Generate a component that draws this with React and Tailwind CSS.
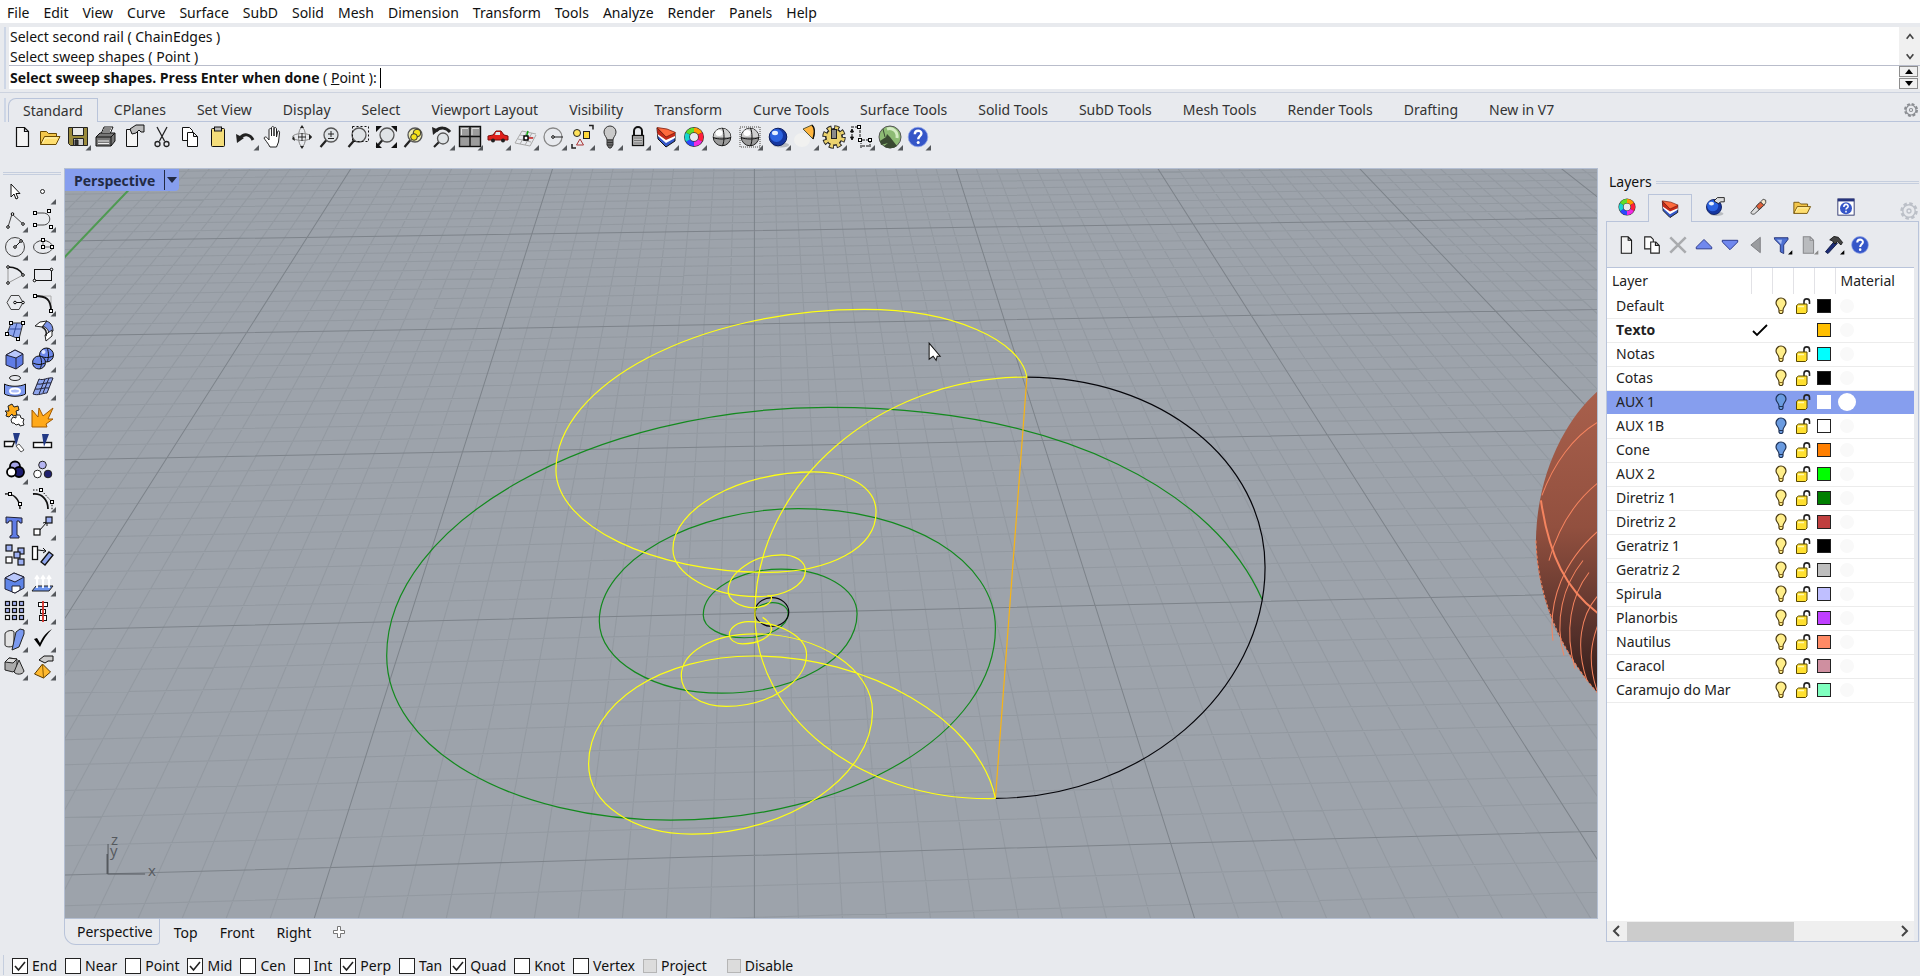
import { useState } from 'react'

const MENUS = ['File', 'Edit', 'View', 'Curve', 'Surface', 'SubD', 'Solid', 'Mesh', 'Dimension', 'Transform', 'Tools', 'Analyze', 'Render', 'Panels', 'Help']

const TOOL_TABS = ['Standard', 'CPlanes', 'Set View', 'Display', 'Select', 'Viewport Layout', 'Visibility', 'Transform', 'Curve Tools', 'Surface Tools', 'Solid Tools', 'SubD Tools', 'Mesh Tools', 'Render Tools', 'Drafting', 'New in V7']

const LAYERS = [
  { name: 'Default', color: '#000000', on: true },
  { name: 'Texto', color: '#ffbf00', current: true },
  { name: 'Notas', color: '#00ffff', on: true },
  { name: 'Cotas', color: '#000000', on: true },
  { name: 'AUX 1', color: '#ffffff', on: false, selected: true },
  { name: 'AUX 1B', color: '#ffffff', on: false },
  { name: 'Cone', color: '#ff7f00', on: false },
  { name: 'AUX 2', color: '#00ff00', on: true },
  { name: 'Diretriz 1', color: '#007f00', on: true },
  { name: 'Diretriz 2', color: '#bf3f3f', on: true },
  { name: 'Geratriz 1', color: '#000000', on: true },
  { name: 'Geratriz 2', color: '#bebebe', on: true },
  { name: 'Spirula', color: '#bfbfff', on: true },
  { name: 'Planorbis', color: '#bf3fff', on: true },
  { name: 'Nautilus', color: '#ff8a65', on: true },
  { name: 'Caracol', color: '#cf8fa0', on: true },
  { name: 'Caramujo do Mar', color: '#7fffbf', on: true },
]

const SNAPS = [
  ['End', true], ['Near', false], ['Point', false], ['Mid', true], ['Cen', false], ['Int', false],
  ['Perp', true], ['Tan', false], ['Quad', true], ['Knot', false], ['Vertex', false],
]

/* ---------- shared icon pieces ---------- */

const Node = ({ x, y }) => <rect x={x - 1.5} y={y - 1.5} width="3" height="3" fill="#fff" stroke="#000" />
const Dot = ({ x, y }) => <circle cx={x} cy={y} r="1.3" fill="#fff" stroke="#000" />
const Cube = ({ x, y, s = 6, fill = '#9db0f2' }) => (
  <rect x={x} y={y} width={s} height={s} fill={fill} stroke="#111" strokeWidth="1.2" />
)

const Page = ({ fill = '#f4f4f4', stroke = '#111' }) => (
  <path d="M8.5 4.5h8l4 4v15h-12zM16.5 4.5v4h4" fill={fill} stroke={stroke} strokeWidth="1.2" />
)

const Folder = () => (
  <g stroke="#6b4a00">
    <path d="M4.5 21.5V8.5h6l2 2h8v3" fill="#f3c64b" />
    <path d="M4.5 21.5l4-8h15.5l-4 8z" fill="#ffdf70" />
    <path d="M6.5 20l2.5-5h12" fill="none" stroke="#fff3b8" />
  </g>
)

const Wheel = () => (
  <g fill="none" strokeWidth="4.5">
    <circle cx="14" cy="14" r="7" stroke="#333" strokeWidth="6" />
    <path d="M14 7a7 7 0 0 1 6.1 3.5" stroke="#ff9a00" />
    <path d="M20.1 10.5a7 7 0 0 1 0 7" stroke="#ff1e3c" />
    <path d="M20.1 17.5a7 7 0 0 1-6.1 3.5" stroke="#f02be0" />
    <path d="M14 21a7 7 0 0 1-6.1-3.5" stroke="#2b49ff" />
    <path d="M7.9 17.5a7 7 0 0 1 0-7" stroke="#16d5d0" />
    <path d="M7.9 10.5a7 7 0 0 1 6.1-3.5" stroke="#5de02a" />
  </g>
)

const LayerStack = () => (
  <g strokeLinejoin="round">
    <path d="M5 5l1 11 8 8 9-6V10l-9 4z" fill="#3558c8" stroke="#111" />
    <path d="M5.5 10l.5 3 8 7 9-5v-3l-9 4z" fill="#fff" />
    <path d="M5 5l.5 6 8.5 6 9-4V9l-9 5z" fill="#c42a18" />
    <path d="M5 4.5l10 1.5 8.5 3.5-9.5 4.5z" fill="#ff6a3c" stroke="#7c1a0a" strokeWidth="0.8" />
  </g>
)

const BlueBall = () => (
  <g>
    <ellipse cx="17" cy="22" rx="8" ry="2.5" fill="#8a8d92" opacity="0.5" />
    <circle cx="14" cy="14" r="8.8" fill="#1536a0" stroke="#0a1c5e" />
    <circle cx="12.5" cy="12.5" r="6.5" fill="#2c63e0" />
    <ellipse cx="11" cy="10" rx="3" ry="2.2" fill="#e4efff" />
  </g>
)

const HelpBall = () => (
  <g>
    <circle cx="14" cy="14" r="9.8" fill="#3556c8" stroke="#8fa3e6" strokeWidth="0.8" />
    <path d="M10.8 11.2c0-4.6 6.6-4.4 6.6-.7 0 2.6-3.2 2.7-3.2 5.7" fill="none" stroke="#fff" strokeWidth="2.4" />
    <circle cx="14.2" cy="19.4" r="1.5" fill="#fff" />
  </g>
)

const GreyBall = () => (
  <g>
    <circle cx="14" cy="14" r="8.8" fill="#9a9a9a" stroke="#222" />
    <path d="M14 5.5A8.5 8.5 0 0 0 5.5 14h17A8.5 8.5 0 0 0 14 5.5z" fill="#cfcfcf" />
    <ellipse cx="11" cy="10" rx="3.5" ry="3" fill="#fff" />
    <path d="M5 14.5c5 2 13 2 18 0M14.5 5c2 5 2 13 0 18" fill="none" stroke="#111" />
  </g>
)

const Lens = ({ fill = '#dfe3e6' }) => (
  <g>
    <path d="M10.5 17L4.5 24" stroke="#222" strokeWidth="2.2" />
    <circle cx="15" cy="12" r="7" fill={fill} stroke="#555" strokeWidth="1.3" />
  </g>
)

/* ---------- top toolbar ---------- */

const STANDARD_TOOLS = [
  { label: 'New', art: <Page /> },
  { label: 'Open', art: <Folder /> },
  { label: 'Save', fly: true, art: (
    <g stroke="#222">
      <path d="M4.5 4.5h19v18h-17l-2-2z" fill="#9a8a3c" />
      <path d="M8.5 4.5h11v8h-11z" fill="#e8e8e8" />
      <path d="M9.5 15.5h10v7h-10z" fill="#cfcfcf" />
      <path d="M11 17h3v5h-3z" fill="#333" />
    </g>
  ) },
  { label: 'Print', art: (
    <g stroke="#111" strokeLinejoin="round">
      <path d="M9 11l3-7h9l-3 7z" fill="#fff" />
      <path d="M4 14l4-4h15v8l-4 5H4z" fill="#777" />
      <path d="M4 14h15l4-4M19 14v9M11 8h7M12 6h7" fill="none" />
      <path d="M6 18h11M6 20.5h11" stroke="#eee" />
    </g>
  ) },
  { label: 'Document properties', art: (
    <g>
      <path d="M6.5 6.5h11v17h-11z" fill="#f4f4f4" stroke="#111" />
      <path d="M10 6l6-4h8v7h-3l-2-2-3 3-4 1z" fill="#bbb" stroke="#111" />
    </g>
  ) },
  { label: 'Cut', art: (
    <g fill="none" stroke="#222" strokeWidth="1.3">
      <path d="M9 4l7.5 14M19 4l-7.5 14" />
      <circle cx="9.5" cy="21" r="2.5" /><circle cx="18.5" cy="21" r="2.5" />
    </g>
  ) },
  { label: 'Copy', art: (
    <g fill="#fff" stroke="#111">
      <path d="M6.5 4.5h7l3 3v10h-10z" />
      <path d="M11.5 9.5h6l4 4v10h-10zM17.5 9.5v4h4" />
    </g>
  ) },
  { label: 'Paste', art: (
    <g stroke="#111">
      <rect x="7.5" y="5.5" width="13" height="18" rx="1" fill="#f4dd7a" />
      <rect x="10.5" y="4" width="7" height="4" fill="#b9b9b9" />
    </g>
  ) },
  { label: 'Undo', fly: true, art: (
    <g>
      <path d="M8 15c4-5 10-4 13 2" fill="none" stroke="#222" strokeWidth="3" />
      <path d="M4 11l1 9 7-5z" fill="#222" />
    </g>
  ) },
  { label: 'Pan', art: (
    <path d="M10 24c-2-4-5-7-6-9 1-2 3-1 5 2V7c0-2 2.5-2 2.5 0v6V5c0-2 2.5-2 2.5 0v8V6c0-2 2.5-2 2.5 0v8l1-5c.5-2 2.5-1 2 1l-1 9-2 5z" fill="#fff" stroke="#222" />
  ) },
  { label: 'Rotate view', art: (
    <g fill="none" stroke="#888">
      <ellipse cx="14" cy="14" rx="9.5" ry="3.5" /><ellipse cx="14" cy="14" rx="3.5" ry="9.5" />
      <path d="M12 5l2-3 2 3zM12 23l2 3 2-3zM6 13l-2 3 3 2zM21 11l3 3-3 3z" fill="#222" stroke="none" />
      <path d="M14 10v8M10 14h8" stroke="#222" />
    </g>
  ) },
  { label: 'Zoom dynamic', art: <g><Lens /><path d="M12 11h6M15 8v6M12 15.5h6" stroke="#222" /></g> },
  { label: 'Zoom window', art: (
    <g><Lens /><rect x="8.5" y="3.5" width="16" height="15" fill="none" stroke="#111" strokeDasharray="2 2" /></g>
  ) },
  { label: 'Zoom extents', art: (
    <g><Lens /><path d="M4 3h6L4 9zM25 3v6l-6-6zM25 25h-6l6-6zM4 25v-6l6 6z" fill="#111" /></g>
  ) },
  { label: 'Zoom selected', art: (
    <g><Lens fill="#ece9b0" /><circle cx="17" cy="10" r="3.8" fill="#f3e11c" stroke="#333" /><circle cx="14" cy="14" r="3.3" fill="#f3e11c" stroke="#333" /></g>
  ) },
  { label: 'Undo view change', fly: true, art: (
    <g>
      <path d="M11 19l-5 5" stroke="#222" strokeWidth="2.2" />
      <circle cx="15" cy="15.5" r="5.5" fill="#dfe3e6" stroke="#555" strokeWidth="1.3" />
      <path d="M8 8c4-4 10-4 14 1" fill="none" stroke="#222" strokeWidth="3" /><path d="M4 4l1 8 6-5z" fill="#222" />
    </g>
  ) },
  { label: 'Four viewports', fly: true, art: (
    <g fill="#9c9c9c" stroke="#111" strokeWidth="1.4">
      <rect x="3.5" y="3.5" width="21" height="20" /><path d="M14 3.5v20M3.5 13.5h21" />
      <path d="M5.5 12V5.5H12M16 12V5.5h7" stroke="#ddd" strokeWidth="1" fill="none" />
    </g>
  ) },
  { label: 'Named views', fly: true, art: (
    <g>
      <path d="M4 13l5-1 3-4h5l3 4 4 1v4H4z" fill="#e0201c" stroke="#7a0c0a" />
      <path d="M12 9h4v3h-5z" fill="#dfe8ee" />
      <circle cx="9" cy="17.5" r="2" fill="#222" /><circle cx="19" cy="17.5" r="2" fill="#222" />
    </g>
  ) },
  { label: 'CPlane', fly: true, art: (
    <g fill="none" stroke="#aaa">
      <path d="M3 20l7-12M8 21l7-12M13 22l7-12M18 23l6-11M10 8l14 3M8 12l14 3M6 16l13 3M3 20l15 3" />
      <path d="M14 15h7" stroke="#c22" strokeWidth="1.5" /><path d="M14 15l2-7" stroke="#1a1" strokeWidth="1.5" />
      <rect x="12" y="13" width="4" height="4" fill="#fff" stroke="#000" strokeWidth="1.4" />
    </g>
  ) },
  { label: 'Circle', fly: true, art: (
    <g fill="none">
      <circle cx="13" cy="14" r="9" stroke="#888" strokeWidth="1.3" /><path d="M13 14h10" stroke="#222" />
      <Dot x={13} y={14} />
    </g>
  ) },
  { label: 'Select', fly: true, art: (
    <g stroke="#222">
      <circle cx="9" cy="10" r="3.5" fill="#ffe25a" /><rect x="15.5" y="8.5" width="6" height="7" fill="#ffd83a" />
      <path d="M12 16l3.5 6h-7z" fill="none" stroke="#a33" /><path d="M21 2.5h4v4M4 21v4h4" fill="none" strokeWidth="1.5" />
    </g>
  ) },
  { label: 'Hide', fly: true, art: (
    <g stroke="#333">
      <path d="M11 17c0-3-3-4-3-8a6 6 0 0 1 12 0c0 4-3 5-3 8z" fill="#c9c9c9" /><path d="M11 17h6v5l-2 3h-2l-2-3z" fill="#6f6f6f" />
      <path d="M11 19.5h6M11 22h6" />
    </g>
  ) },
  { label: 'Lock', fly: true, art: (
    <g>
      <path d="M10 13V8a4 4 0 0 1 8 0v5" fill="none" stroke="#111" strokeWidth="2" />
      <rect x="8.5" y="12.5" width="11" height="10" fill="#bdbdbd" stroke="#111" strokeWidth="1.3" /><path d="M10 15h8M10 17.5h8M10 20h8" stroke="#777" />
    </g>
  ) },
  { label: 'Layers', fly: true, art: <LayerStack /> },
  { label: 'Object color', fly: true, art: <Wheel /> },
  { label: 'Shaded', art: <GreyBall /> },
  { label: 'Rendered', fly: true, art: (
    <g><rect x="4" y="4" width="20" height="20" fill="none" stroke="#999" strokeWidth="2" strokeDasharray="1 1" /><GreyBall /></g>
  ) },
  { label: 'Render', fly: true, art: <BlueBall /> },
  { label: 'Spotlight', fly: true, art: (
    <g>
      <ellipse cx="10" cy="17" rx="8" ry="7" fill="#f3f3f0" opacity="0.8" />
      <path d="M11 6l9-4c3 3 3 8 1 14z" fill="#ffb640" stroke="#553" /><path d="M20 2c3 3 3 8 1 14" fill="none" stroke="#111" strokeWidth="1.4" />
    </g>
  ) },
  { label: 'Options', fly: true, art: (
    <g fill="none">
      <circle cx="14" cy="14" r="9" stroke="#222" strokeWidth="5.5" strokeDasharray="4.6 2.469" />
      <circle cx="14" cy="14" r="7.5" stroke="#222" strokeWidth="3" />
      <circle cx="14" cy="14" r="9" stroke="#ecd36e" strokeWidth="3.6" strokeDasharray="3 4.069" strokeDashoffset="-0.8" />
      <circle cx="14" cy="14" r="7.5" fill="#ecd36e" />
      <rect x="11.5" y="6.5" width="5" height="9" fill="#8a8a8a" stroke="#222" />
    </g>
  ) },
  { label: 'Dimension', fly: true, art: (
    <g fill="none" stroke="#111">
      <path d="M3 4h9v13h10v8M4 7v9M13 25v-5M14 23h7" strokeDasharray="3 1" /><path d="M2.5 9L4 6l1.5 3zM2.5 14L4 17l1.5-3z" fill="#111" />
      <Node x={11} y={4} /><Node x={12} y={17} /><Node x={22} y={17} />
    </g>
  ) },
  { label: 'Grasshopper', fly: true, art: (
    <g>
      <circle cx="14" cy="14" r="11" fill="#8dbb74" stroke="#555" />
      <path d="M11 6c6-2 11 3 10 9" fill="none" stroke="#d5ecc4" strokeWidth="3" />
      <path d="M4 18l6-4 1-3 3 3 7 9c-4 3-10 3-13 0l4-3-7 2z" fill="#3a4a32" /><path d="M9 14L7 6" stroke="#3a4a32" />
    </g>
  ) },
  { label: 'Help', fly: true, art: <HelpBall /> },
]

/* ---------- left toolbar, two per row ---------- */

const SIDE_TOOLS = [
  { label: 'Pointer', art: <path d="M10 7v13l3-3 2 5 2-1-2-4.5h4z" fill="#fff" stroke="#111" /> },
  { label: 'Point', fly: true, art: <circle cx="13.5" cy="14.5" r="2" fill="#fff" stroke="#222" /> },
  { label: 'Polyline', fly: true, art: <g><path d="M7 22l4-13 11 10" fill="none" stroke="#444" /><Dot x={7} y={22} /><Dot x={11.5} y={9} /><Dot x={22} y={19} /></g> },
  { label: 'Curve', fly: true, art: <g><path d="M6 8h8c9 0 9 12 0 12H6" fill="none" stroke="#444" /><Node x={6} y={8} /><Node x={20} y={6} /><Node x={6} y={20} /><Node x={22} y={22} /></g> },
  { label: 'Circle', fly: true, art: <g><circle cx="14" cy="14" r="9.5" fill="none" stroke="#444" /><path d="M14 14l6-6" stroke="#111" /><Dot x={14} y={14} /><Dot x={20} y={8} /></g> },
  { label: 'Ellipse', fly: true, art: <g><ellipse cx="14" cy="14" rx="9.5" ry="6.5" fill="none" stroke="#444" /><path d="M14 7v7h9" stroke="#666" fill="none" /><Node x={14} y={7} /><Node x={14} y={14} /><Node x={23} y={14} /></g> },
  { label: 'Arc', fly: true, art: <g><path d="M7 22V6M7 22l15-8" stroke="#999" /><path d="M7 6c8 0 13 4 15 8" fill="none" stroke="#111" strokeWidth="1.3" /><Dot x={7} y={6} /><Dot x={22} y={14} /><Dot x={7} y={22} /></g> },
  { label: 'Rectangle', fly: true, art: <g><rect x="5.5" y="8.5" width="17" height="11" fill="none" stroke="#111" /><Dot x={22.5} y={8.5} /><Dot x={5.5} y={19.5} /></g> },
  { label: 'Polygon', fly: true, art: <g><path d="M6 13.5l4-7h8l4 7-4 7h-8z" fill="none" stroke="#444" /><path d="M14 13.5h8" stroke="#111" /><Dot x={14} y={13.5} /><Dot x={22} y={13.5} /></g> },
  { label: 'Fillet curves', fly: true, art: <g><path d="M6 7h16v15" fill="none" stroke="#aaa" /><path d="M6 7c11 0 16 3 16 15" fill="none" stroke="#111" strokeWidth="1.8" /><Node x={6} y={7} /><Node x={22} y={22} /></g> },
  { label: 'Surface from points', fly: true, art: <g><path d="M10 6h12l-4 16-12-5z" fill="#8fa6ee" stroke="#333" /><path d="M16 6l-4 14M8 12h12" stroke="#334a9a" /><Node x={10} y={6} /><Node x={22} y={6} /><Node x={6} y={17} /><Node x={17} y={22} /></g> },
  { label: 'Blend surface', fly: true, art: <g stroke="#222"><path d="M14 9c4 2 6 4 6 9l4-4c0-6-3-9-7-10z" fill="#7b93e8" /><path d="M6 9l5-4 7-1-5 6z" fill="#fff" /><path d="M16 18l7-5v6l-6 5z" fill="#fff" /><path d="M13 10c4 2 5 5 4 9" fill="none" strokeWidth="1.5" /></g> },
  { label: 'Box', fly: true, art: <g stroke="#223" strokeLinejoin="round"><path d="M5 10l9-5 8 4v10l-7 5-10-4z" fill="#5f7ce6" /><path d="M5 10l9-5 8 4-7 4z" fill="#b9c7fb" /><path d="M15 13v11" /></g> },
  { label: 'Sphere', fly: true, art: <g stroke="#111"><circle cx="17.5" cy="10" r="7" fill="#6d88ea" /><path d="M11 11c4 2 9 2 13 0M18 3c2 4 2 10 0 14" fill="none" /><circle cx="10" cy="17.5" r="6.5" fill="#6d88ea" /><path d="M4 18c4 2 8 2 12 0M11 11c2 4 2 9 0 13" fill="none" /><circle cx="14.5" cy="7" r="2" fill="#dde5ff" stroke="none" /></g> },
  { label: 'Cylinder', fly: true, art: <g><ellipse cx="14" cy="5" rx="5.5" ry="2.5" fill="none" stroke="#222" /><path d="M3.5 11c5 3 16 3 21 0v10c-5 3-16 3-21 0z" fill="#7b97ee" stroke="#111" /><ellipse cx="14" cy="18" rx="5" ry="2.5" fill="#aebff8" stroke="#fff" strokeWidth="2" /></g> },
  { label: 'Surface edit', fly: true, art: <g stroke="#223"><path d="M10 6c4 2 9-2 14-1l-6 15c-4 0-9 3-14 1z" fill="#8fa6ee" /><path d="M16 6l-6 15M20 5l-6 15M8 11c4 1 9-2 14-1M6 16c4 1 9-2 14-1" fill="none" /></g> },
  { label: 'Mesh tools', art: <g stroke="#222" strokeLinejoin="round"><path d="M4 10l4 0-1-5 4-2 2 3 4-1 1 4-3 1 1 4-4 1-1-2-3 3-3-1 1-3z" fill="#ffab1a" /><path d="M12 16l3 1 0-3 4 0 1 3 3 1-1 3 1 3-4 1-1-2-3 1-2-2-2 0-1-3z" fill="#fff" /></g> },
  { label: 'Explode', art: <path d="M3 26V9l6 7 1-9 4 8L24 7l-5 11h5l-7 5 1 3z" fill="#ffa91a" stroke="#a35a00" /> },
  { label: 'Trim', art: <g stroke="#111"><path d="M3.5 12.5h10l-2 5h-8z" fill="#fff" strokeWidth="1.4" /><path d="M12 4h7l-4 13z" fill="#233a86" stroke="none" /><path d="M15 17l3-2 5 6-3 2z" fill="#fff" stroke="#555" /></g> },
  { label: 'Split', art: <g stroke="#111"><rect x="4.5" y="13.5" width="18" height="5" fill="#fff" strokeWidth="1.4" /><path d="M13 5h7l-5 13z" fill="#233a86" stroke="none" /></g> },
  { label: 'Boolean', fly: true, art: <g stroke="#000" strokeWidth="1.8"><circle cx="14" cy="9.5" r="5" fill="#a5a5e8" /><circle cx="18" cy="15" r="5" fill="#1c1c70" /><circle cx="10.5" cy="15" r="4.5" fill="#fff" /></g> },
  { label: 'Group', art: <g stroke="#222"><circle cx="13.5" cy="8" r="3.8" fill="#b5b5f2" /><circle cx="8.5" cy="17" r="3.8" fill="#fff" /><circle cx="19" cy="17" r="3.8" fill="#20206e" /></g> },
  { label: 'Edit points', art: <g><path d="M4 9c8-1 15 5 15 15" fill="none" stroke="#111" strokeWidth="1.4" /><Node x={9} y={9} /><Node x={19} y={19} /></g> },
  { label: 'Control points', fly: true, art: <g><path d="M4 9c8-1 15 5 15 15" fill="none" stroke="#111" strokeWidth="1.8" /><path d="M4 5h8l11 12v8" fill="none" stroke="#111" strokeDasharray="1.5 1.5" /><Node x={12} y={5} /><Node x={23} y={17} /></g> },
  { label: 'Text', art: <path d="M5 4l16 1v5h-2l-1-2h-2v14l2 1v2H9v-2l2-1V8H8l-1 2H5z" fill="#5f7ce6" stroke="#223" /> },
  { label: 'Move', fly: true, art: <g><path d="M10 18l8-9M14 10l4-1v4" fill="none" stroke="#111" /><Cube x={17} y={4} /><Cube x={5} y={16} fill="#fff" /></g> },
  { label: 'Copy objects', art: <g><Cube x={5} y={4} /><Cube x={17} y={7} /><Cube x={13} y={11} /><Cube x={5} y={16} fill="#fff" /><Cube x={17} y={18} /></g> },
  { label: 'Rotate', art: <g stroke="#111"><rect x="3.5" y="5.5" width="5" height="13" fill="#fff" strokeWidth="1.3" /><path d="M9 9l8 1M14 7l3 3-3 2" fill="none" /><path d="M12 21l8-10 4 3-8 10z" fill="#8fa6ee" strokeWidth="1.3" /></g> },
  { label: 'Solid edit', fly: true, art: <g stroke="#223" strokeLinejoin="round"><path d="M4 9l9-5 10 4v11l-9 5-10-4z" fill="#5f85e8" /><path d="M4 9l9-5 10 4-9 5z" fill="#b9c7fb" /><path d="M11 17l8 0v4l-5 3-3-1z" fill="#fff" /></g> },
  { label: 'Extrude up', fly: true, art: <g><path d="M3 22l4-5h17l-4 5z" fill="#6d94ee" stroke="#222" /><path d="M8 19V8M14 19V8M20 19V8M6 10l2-3 2 3M12 10l2-3 2 3M18 10l2-3 2 3" fill="none" stroke="#fff" strokeWidth="1.8" /></g> },
  { label: 'Array', fly: true, art: <g>{[4.5, 11.5, 18.5].map(y => [4.5, 11.5, 18.5].map(x => <Cube key={x + '-' + y} x={x} y={y} s={4} fill={x === 4.5 && y === 18.5 ? '#fff' : '#a9b6f4'} />))}</g> },
  { label: 'Align', fly: true, art: <g fill="#fff" stroke="#111"><rect x="9.5" y="5.5" width="9" height="4" /><rect x="11.5" y="12.5" width="5" height="4" /><rect x="10.5" y="18.5" width="7" height="5" /><path d="M14 4v21" stroke="#d8322a" strokeWidth="1.8" /></g> },
  { label: 'Cap', fly: true, art: <g stroke="#222"><path d="M4 9c0-3 8-5 9-2v13c-2 3-9 2-9 0z" fill="#e2e2e2" /><path d="M15 7l4-3 4 1v4l-5 13-7 3z" fill="#7b9af0" /></g> },
  { label: 'Check', fly: true, art: <path d="M5 14l3-1 3 5C14 11 18 7 23 4c-5 5-9 11-12 18z" fill="#000" /> },
  { label: 'Solids', fly: true, art: <g stroke="#222"><path d="M4 9l4-4 8 1v9l-4 4-8-2z" fill="#aaa" /><path d="M4 9l4-4 8 1-4 4z" fill="#ddd" /><path d="M18 7l5 11c-1 4-8 4-10 1z" fill="#bcbcbc" /></g> },
  { label: 'Render object', fly: true, art: <g><path d="M13.5 11l8 8-7 6-9-4z" fill="#ffb92e" stroke="#5a3a00" /><path d="M13.5 11l1 14" stroke="#8a5a00" /><path d="M10 7l5-4h9v5h-5l-3 2z" fill="#ccc" stroke="#111" /></g> },
]

const PANEL_TABS = [
  { label: 'Properties', art: <Wheel /> },
  { label: 'Layers', art: <LayerStack /> },
  { label: 'Rendering', art: <g><BlueBall /><path d="M14 7l4-4h8v5h-4l-3 2z" fill="#ddd" stroke="#111" /></g> },
  { label: 'Materials', art: <g stroke="#333"><path d="M6 20l9-10 4 4-9 8c-2 1-5 0-4-2z" fill="#ddd" /><path d="M12 13l5-5 4 4-6 5z" fill="#e0603a" /><path d="M17 8l3-3 3 1v3l-2 3z" fill="#f4e6cc" /></g> },
  { label: 'Libraries', art: <Folder /> },
  { label: 'Help', art: <g><rect x="4.5" y="4.5" width="19" height="19" fill="#fff" stroke="#222a66" /><path d="M4.5 4.5h19v3h-19z" fill="#27357f" /><circle cx="14" cy="15.5" r="7" fill="#3556c8" /><path d="M11.5 14c0-4 5-4 5-.5 0 1.5-2.5 1.5-2.5 3.5M14 18.5v2" fill="none" stroke="#fff" strokeWidth="1.8" /></g> },
]

const BlackFly = <path d="M26 20v5h-5z" fill="#000" />
const LAYER_TOOLS = [
  { label: 'New layer', art: <Page /> },
  { label: 'New sublayer', art: <g fill="#fff" stroke="#222" strokeWidth="1.3"><path d="M5.5 4.5h7l3 3v11h-10z" /><path d="M12.5 10.5h6l4 4v9h-10zM18 10.5v4h4" /></g> },
  { label: 'Delete', art: <path d="M5 5l18 18M23 5L5 23" stroke="#a9abae" strokeWidth="3" /> },
  { label: 'Move up', art: <path d="M14 7.5l9 9v2H5v-2z" fill="#7088ee" stroke="#1c2a80" /> },
  { label: 'Move down', art: <path d="M14 19.5l9-9v-2H5v2z" fill="#7088ee" stroke="#1c2a80" /> },
  { label: 'Move left', art: <path d="M19 5v18L8 14z" fill="#9a9c9f" stroke="#77797c" /> },
  { label: 'Filter', art: <g><path d="M5 5.5h16v2L16 14v10l-4-2v-8L5.5 7.5z" fill="#4d6fd0" stroke="#1c2a70" /><path d="M8 8h6l-1 5z" fill="#a9bdf4" />{BlackFly}</g> },
  { label: 'Columns', art: <g><Page fill="#b9bbbe" stroke="#88898c" /><path d="M26 20v5h-5z" fill="#888" /></g> },
  { label: 'Tools', art: <g><path d="M4 22L15 9l3 3L7 24z" fill="#1d2d78" stroke="#0c1640" /><path d="M9 8l5-4 5 1 5 6-2 3-4-4-3 3-3-4z" fill="#444" stroke="#111" />{BlackFly}</g> },
  { label: 'Help', art: <HelpBall /> },
]

function IconButton({ tool }) {
  return (
    <button type="button" aria-label={tool.label} title={tool.label} className="size-7 shrink-0">
      <svg viewBox="0 0 28 28" className="size-7">
        {tool.art}
        {tool.fly && <path d="M27 22v5.5h-5.5z" fill="#55585c" />}
      </svg>
    </button>
  )
}

function Gear({ className }) {
  return (
    <svg viewBox="0 0 20 20" className={className} fill="none" stroke="currentColor">
      <circle cx="10" cy="10" r="7.5" strokeWidth="2.5" strokeDasharray="3.5 2.39" />
      <circle cx="10" cy="10" r="6.2" strokeWidth="1.4" />
      <circle cx="10" cy="10" r="2" strokeWidth="1.3" />
    </svg>
  )
}

function Chevron({ d, className = 'size-3' }) {
  return <svg viewBox="0 0 12 12" className={className} fill="none" stroke="#444" strokeWidth="2"><path d={d} /></svg>
}

/* ---------- viewport drawing ---------- */

// ground plane -> screen, one unit is one major grid square
const HORIZON = -465
const CENTER = 754.5
function project(u, v) {
  const h = 1 / (0.0009279 + 0.00017 * v + 0.0000069 * u)
  return [CENTER + 0.318 * u * h, HORIZON + h]
}

function gridLine(u0, v0, u1, v1) {
  const [x0, y0] = project(u0, v0)
  const [x1, y1] = project(u1, v1)
  return `M${x0.toFixed(1)} ${y0.toFixed(1)}L${x1.toFixed(1)} ${y1.toFixed(1)}`
}

const minor = []
const major = []
for (let i = -45; i <= 50; i++) (i % 10 ? minor : major).push(gridLine(i / 10, -1.6, i / 10, 4.2))
for (let i = -16; i <= 42; i++) (i % 10 ? minor : major).push(gridLine(-5, i / 10, 5, i / 10))

// quarter arcs between the extremes of a curve: tangents alternate between
// horizontal and vertical, k is how round the corner towards the point is
function arcs(x, y, flat, horizontal) {
  let d = ''
  for (const [nx, ny, k = 0.552] of flat) {
    const dx = (nx - x) * k
    const dy = (ny - y) * k
    d += horizontal
      ? `C${x + dx} ${y} ${nx} ${ny - dy} ${nx} ${ny}`
      : `C${x} ${y + dy} ${nx - dx} ${ny} ${nx} ${ny}`
    x = nx
    y = ny
    horizontal = !horizontal
  }
  return d
}

const SPIRAL = 'M1520 865C1443 570 1190 328 790 328' + arcs(790, 328, [
  [46, 1022, 0.535], [524, 1482, 0.562], [1071, 945, 0.548], [739, 611, 0.565],
  [404, 925, 0.53], [610, 1127, 0.555], [838, 905, 0.555], [710, 780, 0.565],
  [579, 908, 0.535], [648, 972, 0.56], [722, 904, 0.54], [696, 874], [667, 897, 0.5],
], true)

const MOUTH = 'M1124 243' + arcs(1124, 243, [[1525, 775, 0.56], [1071, 1421, 0.54]], true)

const RAIL_TOP = 'M1124 243C1113 140 1000 54 850 54' + arcs(850, 54, [
  [331, 503, 0.535], [685, 789, 0.54], [870, 620, 0.59], [765, 508, 0.585],
  [528, 724, 0.525], [669, 857, 0.53], [751, 784, 0.57], [711, 740, 0.58],
  [621, 842, 0.52], [664, 888, 0.54], [694, 861], [687, 854],
], true)

const RAIL_MID = 'M1124 243' + arcs(1124, 243, [[666, 905, 0.548], [1060, 1422, 0.556]], true) + 'L1071 1421'

const RAIL_LOW = 'M1071 1421C1043 1200 855 1023 665 1023' + arcs(665, 1023, [
  [386, 1325, 0.562], [560, 1521, 0.57], [864, 1178, 0.53], [665, 961, 0.545],
  [542, 1079, 0.565], [618, 1164, 0.57], [753, 1019, 0.525], [655, 927, 0.54],
  [623, 963], [645, 989], [694, 947, 0.54],
], true) + 'C694 938 688 924 679 915'

function Scene() {
  return (
    <svg viewBox="65 169 1532 748" preserveAspectRatio="xMidYMid slice" className="absolute inset-0 size-full" fill="none">
      <rect x="65" y="169" width="1532" height="748" fill="#9da3ab" />
      <path d={minor.join('')} stroke="#90969e" strokeOpacity="0.8" />
      <path d={major.join('')} stroke="#7d838a" />
      <path d={gridLine(-3, 2.5, -3, 4.2)} stroke="#4f9a52" strokeWidth="2" />

      <g transform="translate(360 290) scale(0.5931 0.35714)" strokeWidth="1.2">
        <path vectorEffect="non-scaling-stroke" d={SPIRAL} stroke="#138a1e" />
        <path vectorEffect="non-scaling-stroke" d={MOUTH} stroke="#05050a" />
        <ellipse vectorEffect="non-scaling-stroke" cx="694.5" cy="900" rx="28.5" ry="40" stroke="#05050a" />
        <path vectorEffect="non-scaling-stroke" d="M1124 243L1071 1421" stroke="#f8b414" />
        <path vectorEffect="non-scaling-stroke" d={RAIL_TOP} stroke="#ffff14" />
        <path vectorEffect="non-scaling-stroke" d={RAIL_MID} stroke="#ffff14" />
        <path vectorEffect="non-scaling-stroke" d={RAIL_LOW} stroke="#ffff14" />
      </g>

      {/* shaded shell cut off by the right edge */}
      <defs>
        <linearGradient id="shell" x1="0" y1="0" x2="0" y2="1">
          <stop offset="0" stopColor="#a9604c" />
          <stop offset="0.45" stopColor="#92503f" />
          <stop offset="0.8" stopColor="#54302a" />
          <stop offset="1" stopColor="#2f1a17" />
        </linearGradient>
      </defs>
      <path d="M1600 388C1567 415 1536 470 1535 540C1536 600 1562 655 1600 696z" fill="url(#shell)" />
      <g stroke="#f5845f">
        <path d="M1541 495C1552 465 1572 435 1600 420" />
        <path d="M1540 500C1548 555 1565 590 1600 615" strokeWidth="2" />
        <path d="M1548 560C1558 525 1576 498 1600 480" />
        <path d="M1552 640C1547 600 1562 560 1600 528" />
        <path d="M1563 655C1553 620 1562 585 1582 560" />
        <path d="M1574 668C1563 630 1570 595 1588 572" />
        <path d="M1586 680C1574 645 1580 615 1596 596" />
        <path d="M1596 690C1586 660 1590 640 1600 616" />
        <path d="M1535 540C1537 600 1562 655 1600 696" strokeDasharray="3 2" />
      </g>

      <path d="M109 843V873H146M108 853V873" stroke="#55595e" />
      <g fill="#55595e" className="font-['Open_Sans',sans-serif] text-[15px]">
        <text x="112" y="844">z</text>
        <text x="111" y="855">y</text>
        <text x="149" y="875">x</text>
      </g>
      <path d="M929 343v16l4-3 3 4 1-4h3z" fill="#fff" stroke="#111" />
    </svg>
  )
}

function Bulb({ on }) {
  return (
    <svg viewBox="0 0 14 18" className="block size-[18px]">
      <path d="M5 13c0-3-3-4-3-7a5 5 0 0 1 10 0c0 3-3 4-3 7v2l-1 1.5H6L5 15z" fill={on ? '#ffee8a' : '#6a9be0'} stroke={on ? '#4a3a10' : '#1f3358'} strokeWidth="1.2" />
      <path d="M5 13.5h4" stroke={on ? '#8a6a20' : '#1f3358'} />
    </svg>
  )
}

function OpenLock() {
  return (
    <svg viewBox="0 0 18 18" className="ml-px block size-[18px]">
      <path d="M10 7V4.5C10 1 15.5 1 15.5 4.5V7" fill="none" stroke="#222" strokeWidth="1.6" />
      <path d="M2.5 8.5l2-1.5h8.5v8l-1.5 1.5h-9z" fill="#ffe030" stroke="#5a4a00" />
      <path d="M4 9.5h6" stroke="#fff8b0" strokeWidth="1.5" />
    </svg>
  )
}

function LayerRow({ layer }) {
  return (
    <tr className={layer.selected ? 'h-6 bg-[#869eee]' : 'h-6 border-b border-[#ececec]'}>
      <td className={layer.current ? "pl-[9px] font-['Open_Sans',sans-serif] font-bold" : 'pl-[9px]'}>{layer.name}</td>
      <td>
        {layer.current && (
          <svg viewBox="0 0 18 14" className="h-[14px] w-[18px]" fill="none" stroke="#000" strokeWidth="1.8"><path d="M2 8l4 4L16 2" /></svg>
        )}
      </td>
      <td>{!layer.current && <Bulb on={layer.on} />}</td>
      <td>{!layer.current && <OpenLock />}</td>
      <td>
        <div
          className={layer.selected ? 'ml-[3px] size-[14px]' : 'ml-[3px] size-[14px] border border-[#222]'}
          style={{ background: layer.color }}
        />
      </td>
      <td className="pl-[3px]">
        <div className={layer.selected ? 'size-[18px] rounded-full bg-white' : 'ml-0.5 size-[14px] rounded-full bg-[#f9f9f9]'} />
      </td>
    </tr>
  )
}

function LayersPanel() {
  return (
    <aside className="mb-[5px] flex w-[313px] shrink-0 flex-col pt-1">
      <div className="flex items-center gap-1 pl-[3px]">
        <h2 className="text-[14px] leading-5">Layers</h2>
        <div className="h-[3px] flex-1 border-y border-[#c5cede]" />
      </div>
      <div className="flex h-[29px] items-end">
        {PANEL_TABS.map(tab => (
          <button
            key={tab.label}
            type="button"
            aria-label={tab.label}
            className={tab.label === 'Layers'
              ? 'z-10 -mb-px flex h-7 w-11 items-center justify-center border border-b-0 border-[#b9c4da] bg-[#e8eaee]'
              : 'flex h-7 w-11 items-center justify-center first:w-[42px]'}
          >
            <svg viewBox="0 0 28 28" className="size-6">{tab.art}</svg>
          </button>
        ))}
        <button type="button" aria-label="Panel options" className="ml-auto text-[#bcc0c8]"><Gear className="size-5" /></button>
      </div>
      <div className="flex min-h-0 flex-1 flex-col border border-[#b9c4da] pr-1">
        <div className="flex h-[45px] items-center pl-[6px]">
          {LAYER_TOOLS.map(tool => (
            <button key={tool.label} type="button" aria-label={tool.label} className="flex w-[26px] justify-center">
              <svg viewBox="0 0 28 28" className="size-6">{tool.art}</svg>
            </button>
          ))}
        </div>
        <div className="min-h-0 flex-1 overflow-hidden border-t border-[#b9c4da] bg-white">
          <table className="w-full table-fixed border-collapse text-left text-[14px] leading-5 text-[#222]">
            <colgroup>
              <col />
              <col className="w-[21px]" />
              <col className="w-[21px]" />
              <col className="w-[21px]" />
              <col className="w-[21px]" />
              <col className="w-[79px]" />
            </colgroup>
            <thead>
              <tr className="h-[26px]">
                <th className="pl-[5px] font-normal">Layer</th>
                <th className="border-l border-[#e2e2e6]" />
                <th className="border-l border-[#e2e2e6]" />
                <th className="border-l border-[#e2e2e6]" />
                <th className="border-l border-[#e2e2e6]" />
                <th className="border-l border-[#e2e2e6] pl-[5px] font-normal">Material</th>
              </tr>
            </thead>
            <tbody>
              {LAYERS.map(layer => <LayerRow key={layer.name} layer={layer} />)}
            </tbody>
          </table>
        </div>
        <div className="flex h-5 items-center bg-[#efefef]">
          <button type="button" aria-label="Scroll left" className="flex w-5 justify-center"><Chevron d="M8 1L3 6l5 5" /></button>
          <div className="h-[19px] flex-1"><div className="h-full w-5/8 bg-[#cccccc]" /></div>
          <button type="button" aria-label="Scroll right" className="flex w-5 justify-center"><Chevron d="M4 1l5 5-5 5" /></button>
        </div>
      </div>
    </aside>
  )
}

function CommandArea() {
  return (
    <section className="flex border-b-[3px] border-t-4 border-[#e8eaee] pl-1">
      <div className="w-[5px] shrink-0 border-l-2 border-[#cdd6e6] bg-[#e8eaee]" />
      <div className="flex-1 bg-white text-[14px]">
        <div className="flex h-[39px] border-b border-[#b9bdcb]">
          <div className="flex-1 pl-px leading-5">
            <p>Select second rail ( ChainEdges )</p>
            <p>Select sweep shapes ( Point )</p>
          </div>
          <div className="flex w-[21px] flex-col items-center justify-around bg-[#f0f0f0]">
            <button type="button" aria-label="Scroll up"><Chevron d="M2 8l4-5 4 5" className="size-[10px]" /></button>
            <button type="button" aria-label="Scroll down"><Chevron d="M2 4l4 5 4-5" className="size-[10px]" /></button>
          </div>
        </div>
        <div className="flex h-[23px] items-center">
          <label htmlFor="command" className="whitespace-pre pl-px"><b className="font-['Open_Sans',sans-serif]">Select sweep shapes. Press Enter when done</b> ( <u>P</u>oint ): </label>
          <div className="h-5 w-px bg-black" />
          <input id="command" className="min-w-0 flex-1 outline-none" />
          <div className="flex w-[21px] flex-col gap-px bg-[#f0f0f0] pr-0.5">
            <button type="button" aria-label="Previous command" className="flex h-[11px] items-center justify-center border border-[#8d8d8d]">
              <svg viewBox="0 0 8 5" className="h-[5px] w-2"><path d="M4 0l4 5H0z" /></svg>
            </button>
            <button type="button" aria-label="Next command" className="flex h-[11px] items-center justify-center border border-[#8d8d8d]">
              <svg viewBox="0 0 8 5" className="h-[5px] w-2"><path d="M4 5l4-5H0z" /></svg>
            </button>
          </div>
        </div>
      </div>
    </section>
  )
}

function SnapBox({ label, checked, disabled, onChange }) {
  return (
    <label className="flex items-center gap-1">
      <input
        type="checkbox"
        checked={checked}
        disabled={disabled}
        onChange={onChange}
        className="peer size-4 appearance-none border border-[#222] bg-white disabled:size-[14px] disabled:border-[#b5b5b5] disabled:bg-[#dcdcdc]"
      />
      <svg viewBox="0 0 16 16" className="-ml-5 hidden size-4 peer-checked:block" fill="none" stroke="#222" strokeWidth="1.6"><path d="M3 8l3.5 4L13 4" /></svg>
      {label}
    </label>
  )
}

export default function App() {
  const [snaps, setSnaps] = useState(() => Object.fromEntries(SNAPS))
  const toggle = (name) => setSnaps(s => ({ ...s, [name]: !s[name] }))

  return (
    <div className="flex h-screen flex-col overflow-hidden bg-[#e8eaee] font-['Noto_Sans','Open_Sans',sans-serif] text-[14px] text-[#111]">
      <nav className="flex h-[23px] items-center gap-[14px] bg-white pl-[7px] pt-0.5">
        {MENUS.map(m => <button key={m} type="button">{m}</button>)}
      </nav>

      <CommandArea />

      {/* toolbar tabs */}
      <div className="flex h-[30px] items-end border-t border-[#cdd3df] pl-1">
        <div className="h-6 w-1 border-l-2 border-[#cdd6e6]" />
        <div className="flex h-6 flex-1 gap-px border-b border-[#b9c4da]">
          {TOOL_TABS.map((t, i) => (
            <button
              key={t}
              type="button"
              className={i === 0
                ? '-mb-px rounded-tl-lg border border-b-0 border-[#b9c4da] bg-[#e8eaee] px-[14px] text-[#333]'
                : 'px-[15px] text-[#333]'}
            >
              {t}
            </button>
          ))}
          <button type="button" aria-label="Toolbar options" className="ml-auto pr-px text-[#8a8d92]"><Gear className="size-4" /></button>
        </div>
      </div>

      <div className="flex h-[46px] shrink-0 items-start pl-2 pt-px">
        {STANDARD_TOOLS.map(tool => <IconButton key={tool.label} tool={tool} />)}
      </div>

      <main className="flex min-h-0 flex-1">
        <div className="w-16 shrink-0">
          <div className="mx-[3px] mt-1 h-[3px] border-y border-[#c5cede]" />
          <div className="mt-0.5 grid w-14 grid-cols-2 pl-px">
            {SIDE_TOOLS.map(tool => <IconButton key={tool.label} tool={tool} />)}
          </div>
        </div>

        <div className="flex min-w-0 flex-1 flex-col">
          <div className="relative min-h-0 flex-1 overflow-hidden border border-[#b4bfd2]">
            <Scene />
            <div className="absolute left-0 top-0 flex h-[22px] items-center rounded-br bg-[#869eee] pl-[9px] font-['Open_Sans',sans-serif] font-bold text-[#222a44]">
              Perspective
              <button type="button" aria-label="Viewport menu" className="ml-[9px] flex h-5 w-[15px] items-center justify-center border-l border-[#222a44]">
                <svg viewBox="0 0 10 6" className="h-[6px] w-[10px]"><path d="M0 0h10L5 6z" fill="#222a44" /></svg>
              </button>
            </div>
          </div>
          <div className="flex h-7 items-start">
            <button type="button" className="h-[26px] rounded-b rounded-bl-xl border border-t-0 border-[#b9c4da] pl-3 pr-[6px]">Perspective</button>
            <button type="button" className="ml-[14px] h-[26px]">Top</button>
            <button type="button" className="ml-[22px] h-[26px]">Front</button>
            <button type="button" className="ml-[22px] h-[26px]">Right</button>
            <button type="button" aria-label="Add viewport" className="ml-[22px] flex h-[26px] items-center">
              <svg viewBox="0 0 12 12" className="size-3" fill="#fff" stroke="#777"><path d="M4.5.5h3v4h4v3h-4v4h-3v-4h-4v-3h4z" /></svg>
            </button>
          </div>
        </div>

        <div className="w-2 shrink-0" />
        <LayersPanel />
        <div className="w-px shrink-0" />
      </main>

      {/* object snaps */}
      <footer className="flex h-[29px] shrink-0 items-end gap-2 pb-px pl-[3px] leading-[18px]">
        <div className="h-5 w-px bg-[#c5cede]" />
        {SNAPS.map(([name]) => <SnapBox key={name} label={name} checked={snaps[name]} onChange={() => toggle(name)} />)}
        <SnapBox label="Project" checked={false} disabled />
        <div className="w-1" />
        <SnapBox label="Disable" checked={false} disabled />
      </footer>
    </div>
  )
}
